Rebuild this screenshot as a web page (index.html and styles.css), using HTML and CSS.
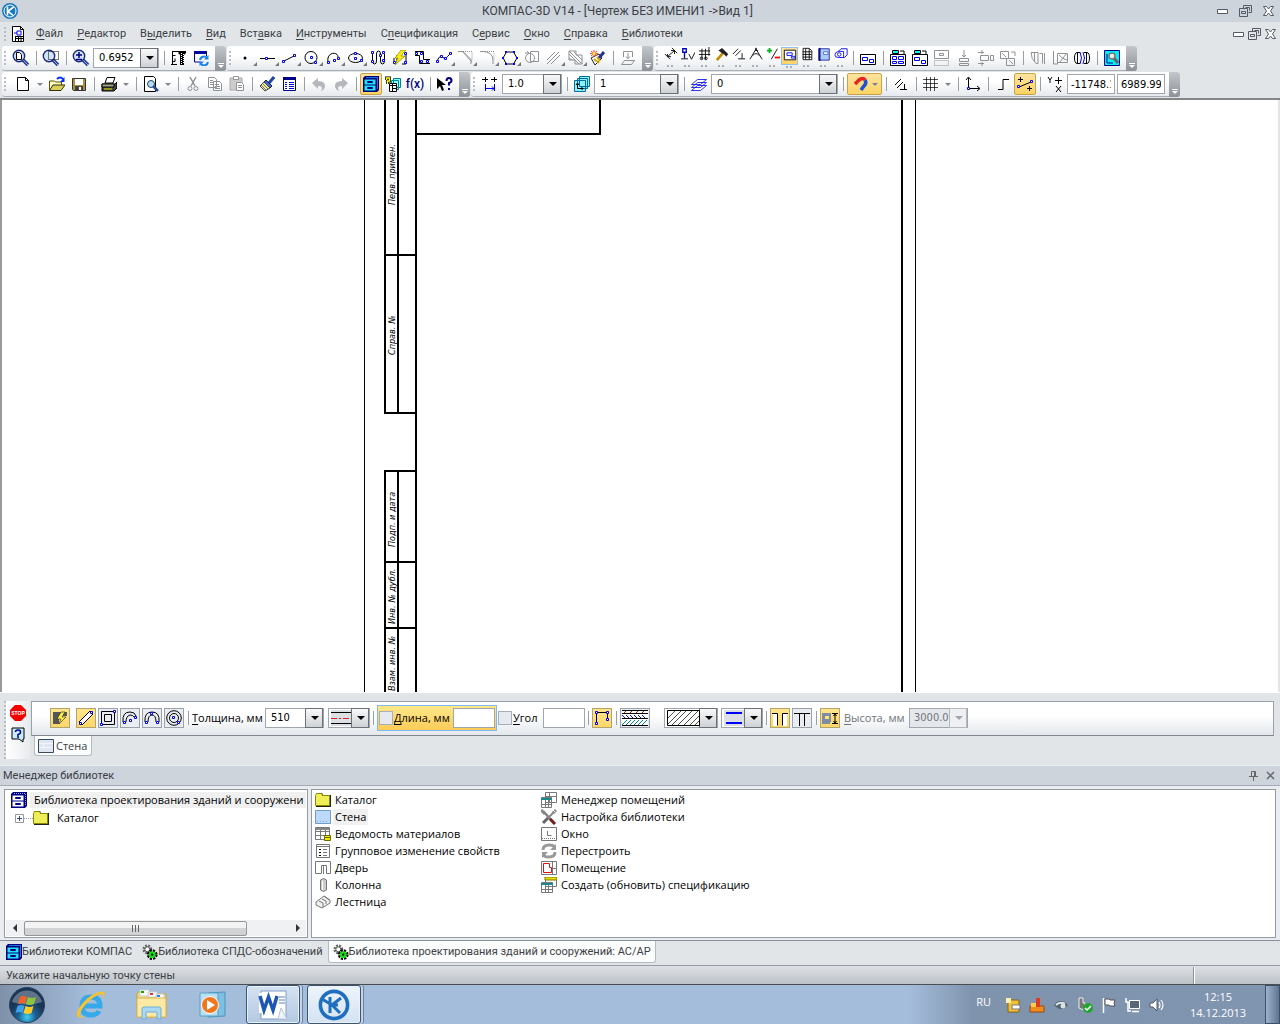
FILE: index.html
```html
<!DOCTYPE html>
<html lang="ru">
<head>
<meta charset="UTF-8">
<meta name="viewport" content="width=device-width, initial-scale=1.0">
<title>КОМПАС-3D V14</title>
<link rel="stylesheet" href="styles.css">
</head>
<body>

<svg class="sprite" aria-hidden="true">
    <symbol id="lens" viewBox="0 0 18 18"><path d="M11 11l5 5" stroke="#2b3f8c" stroke-width="3.5"/><path d="M11 11l5 5" stroke="#8fb0ee" stroke-width="1"/><circle cx="7" cy="7" r="5.7" fill="#cfe4fb" stroke="#1b2a7a" stroke-width="1.4"/></symbol>
    <symbol id="folder" viewBox="0 0 16 16"><path d="M1 3l1-2h5l1 2h8v12H1z" fill="#222"/><path d="M.5 3.500l1-2h5l1 2h7v10H.5z" fill="#f0ee58" stroke="#8a8a00"/></symbol>
    <symbol id="cabinet" viewBox="0 0 16 16"><path d="M0 2l2-2h14v14l-2 2H0z" fill="#00007a"/><path d="M1.500 3.500h11v11h-11z" fill="#1ee3f5"/><path d="M1 9h12" stroke="#00007a"/><path d="M4.500 5.500h5v1h-5zM4.500 11.500h5v1h-5z" fill="none" stroke="#00007a"/><path d="M14.500 1v12M3 1.500h12" stroke="#1f6fe8"/></symbol>
    <symbol id="gears" viewBox="0 0 18 18"><circle cx="6" cy="6" r="4" fill="none" stroke="#666" stroke-width="3" stroke-dasharray="2 1.2"/><circle cx="6" cy="6" r="2.800" fill="#fff" stroke="#444"/><circle cx="11.500" cy="12" r="4.300" fill="none" stroke="#000" stroke-width="3.500" stroke-dasharray="2.200 1.200"/><circle cx="11.500" cy="12" r="3.800" fill="#14e014"/><circle cx="11.500" cy="12" r="1.300" fill="#000"/></symbol>
    <symbol id="kompas" viewBox="0 0 16 16"><circle cx="8" cy="8" r="6.800" fill="none" stroke="currentColor" stroke-width="1.800"/><path d="M6 4v8M11.500 4.500L7 8l4 4M2 5l5 3h3" fill="none" stroke="currentColor" stroke-width="1.500"/></symbol>
    <symbol id="restore" viewBox="0 0 13 12"><path d="M4.500 3.500v-3h8v7h-3M.5 3.500h8v8h-8z" fill="none" stroke="#555a66"/><path d="M2.500 6.500h4v2h-4zM6.500 2.500h4v3" fill="none" stroke="#555a66"/></symbol>
    <symbol id="close" viewBox="0 0 11 10"><path d="M.5.5h3l2 2.500 2-2.500h3L7.500 5l3 4.500h-3L5.500 7l-2 2.500h-3L3.500 5z" fill="#fff" stroke="#555a66"/></symbol>
</svg>

<header class="titlebar">
    <svg class="app-logo" viewBox="0 0 16 16"><circle cx="8" cy="8" r="8" fill="#1779c0"/><circle cx="8" cy="8" r="6" fill="none" stroke="#fff"/><path d="M5.500 3.500v9M11.500 4L6 8.300l5 4" fill="none" stroke="#fff" stroke-width="1.600"/></svg>
    <h1>КОМПАС-3D V14 - [Чертеж БЕЗ ИМЕНИ1 -&gt;Вид 1]</h1>
    <div class="win-buttons">
        <button aria-label="Свернуть"><svg width="11" height="5"><path d="M.5.5h10v4H.5z" fill="#fff" stroke="#555a66"/></svg></button>
        <button aria-label="Восстановить"><svg width="13" height="12"><use href="#restore"/></svg></button>
        <button aria-label="Закрыть"><svg width="11" height="10"><use href="#close"/></svg></button>
    </div>
</header>

<nav class="menubar">
    <span class="grip"></span>
    <svg class="doc-icon" viewBox="0 0 14 16"><path d="M1.500.5h8l3 3v12h-11z" fill="#fff" stroke="#000"/><path d="M9.500.5v3h3M4.500 10v5M7.500 10v5M10 10v5M4 10.500h8M4 12.500h8" fill="none" stroke="#000"/><path d="M3 7h3V5h4v4H6V7" fill="none" stroke="#00f"/></svg>
    <button><u>Ф</u>айл</button>
    <button><u>Р</u>едактор</button>
    <button>В<u>ы</u>делить</button>
    <button><u>В</u>ид</button>
    <button>Вст<u>а</u>вка</button>
    <button><u>И</u>нструменты</button>
    <button>С<u>п</u>ецификация</button>
    <button>С<u>е</u>рвис</button>
    <button><u>О</u>кно</button>
    <button><u>С</u>правка</button>
    <button><u>Б</u>иблиотеки</button>
    <div class="win-buttons child">
        <button aria-label="Свернуть чертеж"><svg width="11" height="5"><path d="M.5.5h10v4H.5z" fill="#fff" stroke="#555a66"/></svg></button>
        <button aria-label="Восстановить чертеж"><svg width="13" height="12"><use href="#restore"/></svg></button>
        <button aria-label="Закрыть чертеж"><svg width="11" height="10"><use href="#close"/></svg></button>
    </div>
</nav>

<div class="toolbars">
<div class="toolbar-row">
    <div class="toolbar">
        <span class="grip"></span>
        <button class="tb" aria-label="Показать все"><svg class="big" viewBox="0 0 18 18"><use href="#lens"/><path class="k w" d="M4.500 3.500h3l2 2v5h-5z"/></svg></button>
        <span class="sep"></span>
        <button class="tb" aria-label="Увеличить рамкой"><svg class="big" viewBox="0 0 18 18"><use href="#lens"/><path class="k dot" d="M6.500 2.500h10v8h-10z"/></svg></button>
        <span class="sep"></span>
        <button class="tb" aria-label="Масштаб"><svg class="big" viewBox="0 0 18 18"><use href="#lens"/><path d="M4 6h6M7 3v6M4 10.500h6" stroke="#000080" stroke-width="1.500"/></svg></button>
        <span class="combo zoom"><select aria-label="Текущий масштаб"><option>0.6952</option></select></span>
        <span class="sep"></span>
        <button class="tb" aria-label="Перестроить"><svg viewBox="0 0 16 16"><path class="k" d="M1 1.500h14M1.500 1v13M4.500 5.500h-3M0 14.500h6M4 8.500v3h-2"/><path d="M9 1h6v2l-2 2v10H9V5L7 3z"/><path d="M10.500 3v12M12.500 4v10" stroke="#fff" stroke-dasharray="1 1"/></svg></button>
        <button class="tb" aria-label="Обновить изображение"><svg viewBox="0 0 16 16"><path d="M1.500 2v10h6M13.500 2v4" fill="none" stroke="#00008b"/><path d="M1 1h13v3H1z" fill="#0008a0"/><path d="M7 10a4 4 0 0 1 7-2M15 12a4 4 0 0 1-7 2" fill="none" stroke="#1684ee" stroke-width="2"/><path d="M15.500 5v4.500H11zM6.500 16v-4.500H11z" fill="#1684ee"/></svg></button>
        <button class="cap" aria-label="Параметры панели"></button>
    </div>

    <div class="toolbar">
        <span class="grip"></span>
        <button class="tb more" aria-label="Точка"><svg viewBox="0 0 16 16"><circle cx="7" cy="8" r="1.500"/></svg></button>
        <button class="tb more" aria-label="Прямая"><svg viewBox="0 0 16 16"><path class="k" d="M0 8.500h15"/><path class="n" d="M5.500 7.500h2v2h-2z"/></svg></button>
        <button class="tb more" aria-label="Отрезок"><svg viewBox="0 0 16 16"><path class="k" d="M2 11L12 6"/><path class="n" d="M.5 10.500h2v2h-2zM11.500 4.500h2v2h-2z"/></svg></button>
        <button class="tb more" aria-label="Окружность"><svg viewBox="0 0 16 16"><circle class="k" cx="7" cy="7.500" r="6"/><path class="n" d="M6.500 6.500h2v2h-2zM10.500 11.500h2v2h-2z"/></svg></button>
        <button class="tb more" aria-label="Дуга"><svg viewBox="0 0 16 16"><path class="k" d="M2 12C0 2 12 1 12 7"/><path class="n" d="M1.500 11.500h2v2h-2zM7.500 9.500h2v2h-2zM11.500 7.500h2v2h-2z"/></svg></button>
        <button class="tb more" aria-label="Эллипс"><svg viewBox="0 0 16 16"><ellipse class="k" cx="7.500" cy="8" rx="7" ry="4.500"/><path class="n" d="M6.500 2.500h2v2h-2zM6.500 7.500h2v2h-2zM12.500 9.500h2v2h-2z"/></svg></button>
        <button class="tb" aria-label="Непрерывный ввод"><svg viewBox="0 0 16 16"><path class="k" d="M2.500 3v8q0 3 2 3t2-3V4q0-3 2-3t2 3v7q0 3 2 3t2-3V4"/><path class="n" d="M1.500 1.500h2v2h-2zM1.500 10.500h2v2h-2zM9.500 4.500h2v2h-2zM12.500 1.500h2v2h-2zM12.500 9.500h2v2h-2z"/></svg></button>
        <button class="tb" aria-label="Линия"><svg viewBox="0 0 16 16"><path class="k" d="M2 8v5h3V5M10 14h4V4"/><path class="n" d="M1.500 11.500h2v2h-2zM12.500 2.500h2v2h-2zM12.500 11.500h2v2h-2z"/><path d="M9 0h5L9 6h4L3 15l3-7H3z" fill="#f7ee10" stroke="#8a8500" stroke-width=".7"/></svg></button>
        <button class="tb" aria-label="Мультилиния"><svg viewBox="0 0 16 16"><path class="k" d="M1 1.500h8.500v8H16M1 5.500h4.500v8H16"/><path class="n" d="M1.500 2.500h2v2h-2zM6.500 2.500h2v2h-2zM6.500 10.500h2v2h-2zM12.500 10.500h2v2h-2z"/></svg></button>
        <button class="tb more" aria-label="Кривая Безье"><svg viewBox="0 0 16 16"><path class="k" d="M1 12q2-7 5-5t4 1 5-5"/><path class="n" d="M.5 10.500h2v2h-2zM4.500 5.500h2v2h-2zM8.500 7.500h2v2h-2zM13.500 2.500h2v2h-2z"/></svg></button>
        <button class="tb more" aria-label="Фаска" disabled><svg viewBox="0 0 16 16"><path class="g" d="M0 1.500h5l8 8V14M4 1L14 12"/><path class="g dot" d="M5 1.500h9v9"/></svg></button>
        <button class="tb more" aria-label="Скругление" disabled><svg viewBox="0 0 16 16"><path class="g" d="M0 1.500h4q9 1 9 9V14"/><path class="g dot" d="M5 1.500h9v9"/></svg></button>
        <button class="tb more" aria-label="Многоугольник"><svg viewBox="0 0 16 16"><path class="k" d="M4.500 2h7l3.500 6-3.500 6h-7L1 8z"/><path d="M3 1h2v2H3zM11 1h2v2h-2zM14 7h2v2h-2zM11 13h2v2h-2zM3 13h2v2H3zM0 7h2v2H0z" fill="#00f"/></svg></button>
        <button class="tb" aria-label="Собрать контур" disabled><svg viewBox="0 0 16 16"><path class="g" d="M6.500 1.500h8v10h-8zM1 3l4 0-2-2"/><circle class="g" cx="6" cy="8" r="4.500"/></svg></button>
        <button class="tb more" aria-label="Эквидистанта" disabled><svg viewBox="0 0 16 16"><path class="g" d="M1 10L9 2M1 14L13 2M5 14l9-9"/></svg></button>
        <button class="tb more" aria-label="Штриховка" disabled><svg viewBox="0 0 16 16"><path class="g" d="M1 1h7v4h6v9H7v-4H1zM1 4l10 10M1 1l13 13M1 8l3 2M6 2l8 8"/></svg></button>
        <button class="tb" aria-label="Свойства"><svg viewBox="0 0 16 16"><path d="M1 8l8-4 3 4-7 7z" fill="#fff" stroke="#222"/><path d="M4 9l5 4M7 7l3 4" stroke="#d0a800" stroke-width="2"/><path d="M9 8l5-6" stroke="#26348c" stroke-width="3"/><path d="M4 0v7M0 3.500h8M1 1l6 5M7 1L1 6" stroke="#f33" /><circle cx="4" cy="3.500" r="1.500" fill="#ff3"/></svg></button>
        <span class="sep"></span>
        <button class="tb" aria-label="Вставка" disabled><svg viewBox="0 0 16 16"><path class="g" d="M3.500 7V1.500h9V7M8 3v6M6 6.500l2 2 2-2M1.500 14.500h10l3-4h-10z"/></svg></button>
        <button class="cap" aria-label="Параметры панели"></button>
    </div>

    <div class="toolbar compact">
        <span class="grip"></span>
        <button class="tb" aria-label="Размеры"><svg viewBox="0 0 16 16"><path class="k" d="M1 8l6 6M9 1l6 6M4 11l8-7M4 8v3h4M8 4h4v4"/></svg></button>
        <button class="tb" aria-label="Обозначения"><svg viewBox="0 0 16 16"><path class="k" d="M0 13.500h8M9 8l3 6 4-8"/><path d="M2 2h4v4H2zM4 6v7" fill="none" stroke="#0000c8" stroke-width="1.500"/></svg></button>
        <button class="tb" aria-label="Обозначения для строительства"><svg viewBox="0 0 16 16"><path class="k" d="M1 4.500h13M1 8.500h13M4.500 2v12M8.500 2v12M12.500 0v10"/><circle class="k" cx="4" cy="13" r="1.500"/><circle class="k" cx="9" cy="13" r="1.500"/></svg></button>
        <button class="tb" aria-label="Редактирование"><svg viewBox="0 0 16 16"><path d="M2 15l7-8" stroke="#c58a00" stroke-width="3"/><path d="M4 4l4-3 7 7-2 3-3-3-2-1z" fill="#222"/></svg></button>
        <button class="tb" aria-label="Параметризация"><svg viewBox="0 0 16 16"><path class="k" d="M1 8l6-6M4 10l6-6M7 13.500h8M11.500 13V7"/></svg></button>
        <button class="tb" aria-label="Измерения"><svg viewBox="0 0 16 16"><path class="k" d="M1 14L7 4l1-3 1 3 6 10M4 10q4-5 8 0M7 4h3"/></svg></button>
        <button class="tb" aria-label="Выделение"><svg viewBox="0 0 16 16"><path class="k" d="M6 14L13 2"/><path d="M1 4h6M4 1v6" stroke="#00b020" stroke-width="2"/><path d="M10 12h6" stroke="#f00" stroke-width="2"/></svg></button>
        <button class="tb active" aria-label="Виды"><svg viewBox="0 0 16 16"><path class="k w" d="M1.500 2.500h13v11h-13z"/><path class="b" d="M4.500 5.500h6v3h-6zM9.500 9.500h4v2h-4z"/></svg></button>
        <button class="tb" aria-label="Спецификация"><svg viewBox="0 0 16 16"><path class="k w" d="M3.500 1.500h7l3 3v10h-10zM3 5.500h10M3 8.500h10M3 11.500h10M6.500 2v12M10.500 2v12"/></svg></button>
        <button class="tb" aria-label="Отчеты"><svg viewBox="0 0 16 16"><path d="M2 2h12v13H2z" fill="#a9cdfa" stroke="#2020a0"/><path d="M3 1v15" stroke="#10107a" stroke-width="2"/><path d="M7.500 5.500h5v3h-5z" fill="#fff" stroke="#4a6ad0"/></svg></button>
        <button class="tb" aria-label="Вставки и макроэлементы"><svg viewBox="0 0 16 16"><path class="b" d="M5 5l3-3h7v7l-3 3H5q-4 0-4-3t4-4h6v7"/><circle class="b" cx="6" cy="8.500" r="2"/></svg></button>
        <span class="sep"></span>
        <button class="tb wide" aria-label="Создать новый вид"><svg viewBox="0 0 16 16"><path class="k w" d="M.5 4.500h15v10H.5z"/><path class="b" d="M2.500 7.500h5v3h-5zM9.500 9.500h4v3h-4z"/></svg></button>
        <span class="sep"></span>
        <button class="tb wide" aria-label="Вид с листа"><svg viewBox="0 0 16 16"><path class="k w" d="M.5 4.500h15v11H.5zM2.500.5h6v3h-6zM10 1h4v3"/><path d="M3 1h5v2H3z" fill="#0ff"/><path class="b" d="M2.500 6.500h4v3h-4zM8.500 6.500h5v3h-5zM2.500 11.500h4v2h-4zM8.500 11.500h5v2h-5z"/></svg></button>
        <button class="tb wide" aria-label="Произвольный вид"><svg viewBox="0 0 16 16"><path class="k w" d="M.5 4.500h15v11H.5zM2.500.5h6v3h-6zM10 1h4v3"/><path d="M3 1h5v2H3z" fill="#0ff"/><path class="b" d="M2.500 7.500h5v3h-5zM9.500 10.500h4v3h-4z"/></svg></button>
        <button class="tb wide" aria-label="Проекционный вид" disabled><svg viewBox="0 0 16 16"><path class="g" d="M.5.5h14v8H.5zM5.500 3.500h4v2h-4z"/><path class="g dot" d="M.5 10.500h14v5H.5z"/></svg></button>
        <button class="tb wide" aria-label="Разрез" disabled><svg viewBox="0 0 16 16"><path class="g" d="M8 0v7M6 5l2 2 2-2M3.500 8.500h9v3h-9zM3.500 13.500h9v2h-9z"/></svg></button>
        <button class="tb wide" aria-label="Местный разрез" disabled><svg viewBox="0 0 16 16"><path class="g" d="M2.500 5.500h8v5h-8zM0 2.500h6M4 0v4M0 13.500h6M4 12v4M12.500 5.500h3v5h-3z"/></svg></button>
        <button class="tb wide" aria-label="Выносной элемент" disabled><svg viewBox="0 0 16 16"><path class="g" d="M.5 1.500h8v7h-8zM6.500 8.500h8v7h-8zM2 3l4 4M9 10l4 4M11 2h4v4"/></svg></button>
        <span class="sep"></span>
        <button class="tb wide" aria-label="Разрыв вида" disabled><svg viewBox="0 0 16 16"><path class="g" d="M1 2.500h7v11H6Q1 9 1 2.500M9.500 3.500h3v10M14.500 3v11M4.500 3v9"/></svg></button>
        <button class="tb wide" aria-label="Разорвать" disabled><svg viewBox="0 0 16 16"><path class="g" d="M1.500 1v13h4V3.500h10v9h-10M7 5q3 4 8 5M8 12l6-8"/></svg></button>
        <button class="tb wide" aria-label="Изменить разрыв"><svg viewBox="0 0 16 16"><path class="k w" d="M6 2.500H3Q.5 3 .5 8T3 13.500h3M10 2.500h3q2.500.5 2.500 5.500T13 13.500h-3M3.500 3v10M12.500 3v10"/><path class="b" d="M6 2q3 6 0 12M9 2q3 6 0 12"/></svg></button>
        <span class="sep"></span>
        <button class="tb wide" aria-label="Управление видами"><svg viewBox="0 0 16 16"><path d="M.5.5h15v15H.5z" fill="#00f0f4" stroke="#00008b"/><path d="M3 4v9h6" fill="none" stroke="#00008b"/><path d="M9 7l5 6" stroke="#666" stroke-width="3"/><circle cx="8" cy="6" r="3" fill="#eee" stroke="#777" stroke-width="1.500"/></svg></button>
        <button class="cap" aria-label="Параметры панели"></button>
    </div>
</div>

<div class="toolbar-row">
    <div class="toolbar">
        <span class="grip roomy"></span>
        <button class="tb" aria-label="Создать"><svg viewBox="0 0 16 16"><path class="k w" d="M2.500 1.500h8l3 3v10h-11zM10.500 1.500v3h3"/></svg></button>
        <button class="drop" aria-label="Тип документа"></button>
        <button class="tb" aria-label="Открыть"><svg viewBox="0 0 16 16"><path d="M.5 14V5h5l1 1h6v3" fill="#fffbc0" stroke="#555500"/><path d="M.5 14.500L4 9h12l-4 5.500z" fill="#d8cf5e" stroke="#333300"/><path d="M8 3q3-3 6 0" fill="none" stroke="#0030ff" stroke-width="2"/><path d="M15.500 1v5H11z" fill="#0030ff"/></svg></button>
        <button class="tb" aria-label="Сохранить"><svg viewBox="0 0 16 16"><path d="M1.500 2.500h13v12h-12l-1-1z" fill="#a89040" stroke="#333"/><path d="M4 3h8v6H4z" fill="#fff"/><path d="M4 10h8v4H4z" fill="#444"/><path d="M8 11h2v3H8z" fill="#fff"/></svg></button>
        <span class="sep"></span>
        <button class="tb" aria-label="Печать"><svg viewBox="0 0 16 16"><path class="k w" d="M4 7l2-5.500h8L12 7z"/><path d="M1 8h13l2-2v6l-3 3H1z" fill="#444" stroke="#000"/><path d="M1 8h12v3H1z" fill="#a8a884" stroke="#000"/><path d="M3 13h8" stroke="#e6e600"/></svg></button>
        <button class="drop" aria-label="Параметры печати"></button>
        <span class="sep"></span>
        <button class="tb" aria-label="Предварительный просмотр"><svg viewBox="0 0 16 16"><path class="k w" d="M1.500.5h9l2 2v13h-11z"/><circle cx="8" cy="8" r="3.500" fill="#b4dcf8" stroke="#245"/><path d="M10 10l5 5" stroke="#2948a0" stroke-width="2.500"/></svg></button>
        <button class="drop" aria-label="Параметры просмотра"></button>
        <span class="sep"></span>
        <button class="tb" aria-label="Вырезать" disabled><svg viewBox="0 0 16 16"><path class="g" d="M5 1l5 9M11 1l-5 9" stroke-width="1.500"/><circle class="g" cx="5" cy="12.500" r="2"/><circle class="g" cx="11" cy="12.500" r="2"/></svg></button>
        <button class="tb" aria-label="Копировать" disabled><svg viewBox="0 0 16 16"><path class="g w" d="M1.500 1.500h6l2 2v8h-8zM6.500 5.500h6l2 2v7h-8zM8 8.500h4M8 10.500h5M8 12.500h5M3 4.500h3M3 6.500h3M3 8.500h3"/></svg></button>
        <button class="tb" aria-label="Вставить" disabled><svg viewBox="0 0 16 16"><path d="M1 2h12v12H1z" fill="#ccc" stroke="#aaa"/><path class="g w" d="M4.500.5h5v3h-5zM7.500 6.500h5l2 2v6h-7zM9 9.500h4M9 11.500h4"/></svg></button>
        <span class="sep"></span>
        <button class="tb" aria-label="Копировать свойства"><svg viewBox="0 0 16 16"><path d="M15 1l-5 6" stroke="#2846a0" stroke-width="3"/><path d="M7 4l6 6-2 2-6-6z" fill="#4468d8" stroke="#123"/><path d="M5 6l6 6-5 3-5-5z" fill="#f1ed95" stroke="#444"/><path d="M4 8l5 5M2 9l5 5" stroke="#777"/></svg></button>
        <button class="tb" aria-label="Свойства документа"><svg viewBox="0 0 16 16"><path d="M2.500 1.500h12v13h-12z" fill="#fff" stroke="#00008b"/><path d="M2 1h13v3H2z" fill="#00008b"/><path class="b" d="M4 6.500h2M4 8.500h2M4 10.500h2M4 12.500h2M8 6.500h5M8 8.500h5M8 10.500h5M8 12.500h5"/></svg></button>
        <span class="sep"></span>
        <button class="tb" aria-label="Отменить" disabled><svg viewBox="0 0 16 16"><path d="M1 7l6-5v3q8 0 7 6-1 3-4 4 3-5-3-5v3z" fill="#b4b8bc"/></svg></button>
        <button class="tb" aria-label="Повторить" disabled><svg viewBox="0 0 16 16"><path d="M15 7L9 2v3q-8 0-7 6 1 3 4 4-3-5 3-5v3z" fill="#b4b8bc"/></svg></button>
        <span class="sep"></span>
        <button class="tb active" aria-label="Менеджер библиотек"><svg viewBox="0 0 16 16"><use href="#cabinet"/></svg></button>
        <button class="tb" aria-label="Менеджер документа"><svg viewBox="0 0 16 16"><path d="M8.500 2.500h7v9h-7zM6.500 4.500h7v9h-7z" fill="#8ff" stroke="#088"/><path class="k w" d="M4.500 7.500h7v8h-7zM4 9.500h7M7.500 7v8M8 12.500h3"/><path d="M1.500 4V2h3v3h-2v3" fill="none" stroke="#000" stroke-width="3"/><path d="M1.500 4V2h3v3h-2v3" fill="none" stroke="#ff0" stroke-width="1.500"/></svg></button>
        <button class="tb fx" aria-label="Переменные">f(x)</button>
        <span class="sep"></span>
        <button class="tb" aria-label="Справка"><svg viewBox="0 0 16 16"><path d="M0 2v11l3-3 2 5 2-1-2-5h4z"/><path d="M9.500 5q0-3 2.500-3t2.500 2.500q0 2-2.500 2.500V9.500M11 13h2" stroke-width="2" fill="none" stroke="#000080"/></svg></button>
        <button class="cap" aria-label="Параметры панели"></button>
    </div>

    <div class="toolbar">
        <span class="grip"></span>
        <button class="tb" aria-label="Шаг курсора"><svg viewBox="0 0 16 16"><path class="k" d="M0 3.500h6M3.500 1v5M9 3.500h6M12.500 1v5"/><path class="b" d="M4 12.500h9M3.500 8v7M12.500 8v7M10 10.500l2 2-2 2"/></svg></button>
        <span class="combo step"><select aria-label="Текущий шаг курсора"><option>1.0</option></select></span>
        <span class="sep"></span>
        <button class="tb" aria-label="Состояния видов"><svg viewBox="0 0 16 16"><path d="M5.500.5h10v10h-10zM3.500 2.500h10v10h-10zM.5 4.500h11v11H.5z" fill="#86f3fa" stroke="#0a6a9a"/><path class="k" d="M3.500 7v5.500H9M2 9l1.500-2L5 9M7.500 11L9 12.500 7.500 14"/></svg></button>
        <span class="combo view"><select aria-label="Текущий вид"><option>1</option></select></span>
        <span class="sep"></span>
        <button class="tb" aria-label="Состояния слоев"><svg viewBox="0 0 16 16"><path class="b w" d="M.5 14.500h9l6-5h-9zM.5 11.500h9l6-5h-9zM.5 8.500h9l6-5h-9z" stroke-width=".8"/></svg></button>
        <span class="combo layer"><select aria-label="Текущий слой"><option>0</option></select></span>
        <span class="sep"></span>
        <button class="tb active magnet" aria-label="Привязки"><svg viewBox="0 0 16 16"><path d="M3 8L7 4q4-3 6 0" fill="none" stroke="#e8231c" stroke-width="3.500"/><path d="M13 4q2 3-1 6l-3 4" fill="none" stroke="#1d4fd8" stroke-width="3.500"/></svg><i class="tri"></i></button>
        <span class="sep"></span>
        <button class="tb" aria-label="Запретить привязки"><svg viewBox="0 0 16 16"><path class="k" d="M2 9l6-6M4 12l6-6M7 13.500h7M11.500 13V8"/></svg></button>
        <span class="sep"></span>
        <button class="tb" aria-label="Сетка"><svg viewBox="0 0 16 16"><path class="k thinner" d="M0 3.500h15M0 7.500h15M0 11.500h15M3.500 1v14M7.500 1v14M11.500 1v14"/></svg></button>
        <button class="drop" aria-label="Параметры сетки"></button>
        <span class="sep"></span>
        <button class="tb" aria-label="Локальная СК"><svg viewBox="0 0 16 16"><path class="k" d="M3.500 12V2M1 4l2.500-3L6 4M5 12.500h9M12 10l3 2.500-3 2.500"/><path class="n" d="M2.500 11.500h2v2h-2z"/></svg></button>
        <span class="sep"></span>
        <button class="tb" aria-label="Ортогональное черчение"><svg viewBox="0 0 16 16"><path class="k" d="M3 13.500h5V3.500h6"/></svg></button>
        <button class="tb active" aria-label="Округление"><svg viewBox="0 0 16 16"><path class="k" d="M1 3.500h5M3.500 1v5M10 12.500h5M12.500 10v5M2 11l12-5"/><path class="n" d="M.5 9.500h2v2h-2zM13.500 4.500h2v2h-2z"/></svg></button>
        <span class="sep"></span>
        <button class="tb" aria-label="Координаты курсора"><svg viewBox="0 0 16 16"><path class="k" d="M1 1l2 3 2-3M3 4v3M8 4.500h7M11.500 1v7M9 10l5 6M14 10l-5 6"/></svg></button>
        <input class="coord" aria-label="X" value="-11748.19">
        <input class="coord" aria-label="Y" value="6989.991">
        <button class="cap" aria-label="Параметры панели"></button>
    </div>
</div>
</div>

<main class="canvas">
    <!-- sheet frame with the side title block -->
    <svg class="sheet" width="1276" height="593">
        <path class="thin" d="M362.500 0v593M913.500 0v593"/>
        <path class="bold" d="M414 0v593M900 0v593M414 34h184V0M383 0v313h31M396 0v313M383 155h31M414 371h-31v222M396 371v222M383 462h31M383 528h31"/>
        <g class="gost">
            <text transform="translate(393 105) rotate(-90)">Перв. примен.</text>
            <text transform="translate(393 255) rotate(-90)">Справ. №</text>
            <text transform="translate(393 447) rotate(-90)">Подп. и дата</text>
            <text transform="translate(393 524) rotate(-90)">Инв. № дубл.</text>
            <text transform="translate(393 591) rotate(-90)">Взам. инв. №</text>
        </g>
    </svg>
</main>

<section class="props">
    <span class="grip tall"></span>
    <div class="props-side">
        <button aria-label="Прервать команду"><svg width="16" height="16" viewBox="0 0 16 16"><path d="M5 0h6l5 5v6l-5 5H5l-5-5V5z" fill="#f00000"/><text x="8" y="10" class="stop-text">STOP</text></svg></button>
        <button aria-label="Справка"><svg width="14" height="16" viewBox="0 0 14 16"><path d="M1 1h12v11h-1v3l-4-3H1z" fill="#c8ecfb" stroke="#000"/><path d="M4.500 5q0-2 2.500-2t2.500 2T7 7.500V9M6 10h2" fill="none" stroke="#00008b" stroke-width="1.500"/></svg></button>
    </div>
    <div class="props-main">
        <div class="props-bar">
            <button class="pb active first" aria-label="Автосоздание"><svg viewBox="0 0 16 16"><path d="M1 2h14v4H7v8H1z" fill="#555"/><path d="M9 2L5 9h4l-2 5 7-7h-4l3-5z" fill="#fff34a" stroke="#222" stroke-width=".6"/></svg></button>
            <button class="pb active" aria-label="Отрезок"><svg viewBox="0 0 16 16"><path class="k w" d="M1 12L12 1l3 3L4 15z"/><path class="n" d="M1.500 12.500h2v2h-2zM12.500 1.500h2v2h-2z"/></svg></button>
            <button class="pb" aria-label="Прямоугольник"><svg viewBox="0 0 16 16"><path class="k" d="M1.500 1.500h13v13h-13zM4.500 4.500h7v7h-7z"/><path class="n" d="M.5 13.500h2v2h-2zM13.500.5h2v2h-2z"/></svg></button>
            <button class="pb" aria-label="Дуга"><svg viewBox="0 0 16 16"><path class="k" d="M1 12Q0 2 8 2q5 0 6 4M4 12q0-6 4-7 3 0 4 2"/><path class="n" d="M1.500 11.500h2v2h-2zM7.500 9.500h2v2h-2zM12.500 6.500h2v2h-2z"/></svg></button>
            <button class="pb" aria-label="Дуга по трем точкам"><svg viewBox="0 0 16 16"><path class="k" d="M1 12Q0 2 8 2t7 10M4 12q0-7 4-7t4 7"/><path class="n" d="M1.500 11.500h2v2h-2zM6.500 2.500h2v2h-2zM12.500 11.500h2v2h-2z"/></svg></button>
            <button class="pb" aria-label="Окружность"><svg viewBox="0 0 16 16"><circle class="k" cx="8" cy="8" r="7.300"/><circle class="k" cx="8" cy="8" r="4.500"/><path class="n" d="M6.500 6.500h2v2h-2zM11.500 11.500h2v2h-2z"/></svg></button>
            <span class="sep"></span>
            <label for="thickness"><u>Т</u>олщина, мм</label>
            <span class="combo p510"><select id="thickness"><option>510</option></select></span>
            <span class="combo swatch-combo">
                <select aria-label="Положение базовой линии"><option></option></select>
                <svg class="swatch" width="20" height="16"><path d="M0 0h20v16H0z" fill="#dcdfe3"/><path class="k" d="M0 2.500h20M0 13.500h20"/><path d="M0 8.500h20" stroke="#e02020" stroke-dasharray="6 2 2 2"/></svg>
            </span>
            <span class="sep"></span>
            <span class="field hot"><input type="checkbox" id="lenLock"><label for="lenLock"><u>Д</u>лина, мм</label><input class="num" aria-label="Длина, мм"></span>
            <span class="field"><input type="checkbox" id="angLock"><label for="angLock"><u>У</u>гол</label><input class="num" aria-label="Угол"></span>
            <span class="sep"></span>
            <button class="pb active" aria-label="Замкнуть"><svg viewBox="0 0 16 16"><path class="k" d="M2.500 12V2.500h11V9"/><path class="n" d="M1.500 12.500h2v2h-2zM1.500 1.500h2v2h-2zM12.500 1.500h2v2h-2zM12.500 8.500h2v2h-2z"/></svg></button>
            <span class="sep"></span>
            <button class="pb layers" aria-label="Слои стены"><svg width="26" height="16" viewBox="0 0 26 16"><path d="M0 0h26v16H0z" fill="#fff"/><path d="M1 4l3-3M7 4l3-3M13 4l3-3M19 4l3-3" stroke="#e00"/><path d="M0 5l3 3M4 5l3 3M8 5l3 3M12 5l3 3M16 5l3 3M20 5l3 3" stroke="#00f"/><path d="M0 15l5-5M4 15l5-5M8 15l5-5M12 15l5-5M16 15l5-5M20 15l5-5" stroke="#088"/><path class="k" d="M0 .5h26M0 3.500h26M0 8.500h26M0 15.500h26"/></svg></button>
            <span class="combo hatch-combo">
                <select aria-label="Штриховка"><option></option></select>
                <svg class="swatch" width="33" height="16"><path class="k w" d="M.5.5h32v15H.5z"/><path class="k thinner" d="M1 8l7-7M1 14L14 1M5 15L19 1M11 15L25 1M17 15L31 1M23 15l9-9M28 15l4-4"/></svg>
            </span>
            <span class="combo swatch-combo">
                <select aria-label="Стиль линии"><option></option></select>
                <svg class="swatch" width="20" height="16"><path d="M0 0h20v16H0z" fill="#dcdfe3"/><path d="M2 3h16M2 13h16" stroke="#00f" stroke-width="2"/></svg>
            </span>
            <span class="sep"></span>
            <button class="pb active" aria-label="Обрезать"><svg viewBox="0 0 16 16"><path d="M1 4h5v12h4V4h5v12H1z" fill="#fff"/><path class="k" d="M0 3.500h5.500v12M16 3.500h-5.500v12"/></svg></button>
            <button class="pb" aria-label="Объединить"><svg viewBox="0 0 16 16"><path class="k" d="M0 3.500h16M5.500 4v12M10.500 4v12"/></svg></button>
            <span class="sep"></span>
            <button class="pb active" aria-label="Высота по этажу"><svg viewBox="0 0 16 16"><path d="M0 3h9v9H8v2H0z" fill="#7d8da6"/><path d="M3 6h4v3H3z" fill="#ffe27a"/><path class="k" d="M10 3.500h6M13 4v9M10 13.500h6M11.500 6L13 4l1.500 2M11.500 11l1.500 2 1.500-2"/></svg></button>
            <label class="off" for="height"><u>В</u>ысота, мм</label>
            <span class="combo p510 off"><select id="height" disabled><option>3000.0</option></select></span>
        </div>
        <button class="props-tab"><svg width="16" height="14"><path d="M.5.5h15v13H.5z" fill="#dfe6ef" stroke="#3a4a5e"/><path d="M1 4.500h14M1 8.500h14M5.500 5v4" stroke="#f2f6fa"/></svg>Стена</button>
    </div>
</section>

<section class="manager">
    <div class="manager-title">
        <h2>Менеджер библиотек</h2>
        <button aria-label="Закрепить"><svg width="9" height="10"><path d="M2.500 5V.5h4V5M5.500 1v4M0 5.500h9M4.500 6v4" fill="none" stroke="#666"/></svg></button>
        <button aria-label="Закрыть панель"><svg width="9" height="9"><path d="M1 1l7 7M8 1L1 8" stroke="#666" stroke-width="1.500"/></svg></button>
    </div>
    <div class="manager-body">
        <div class="tree">
            <div class="tree-rows">
                <div class="tree-row"><svg width="16" height="16" viewBox="0 0 16 16"><path d="M0 2l2-2h14v14l-2 2H0z" fill="#00008b"/><path d="M1.500 3.500h11v11h-11z" fill="#fff"/><path d="M1 9h12" stroke="#00008b"/><path d="M4.500 5.500h5v1h-5zM4.500 11.500h5v1h-5z" fill="none" stroke="#00008b"/><path d="M3 1.500h12M14.500 2v11" stroke="#9ab" stroke-dasharray="1 1"/></svg><span class="sel">Библиотека проектирования зданий и сооружени</span></div>
                <div class="tree-row child"><button class="plus" aria-label="Развернуть"><svg width="9" height="9"><path d="M.5.5h8v8h-8z" fill="#fff" stroke="#999"/><path d="M2 4.500h5M4.500 2v5" stroke="#2a4a9a"/></svg></button><i class="dots"></i><svg width="16" height="16"><use href="#folder"/></svg><span>Каталог</span></div>
            </div>
            <div class="scrollbar">
                <button class="arrow left" aria-label="Влево"></button>
                <div class="thumb"><i></i></div>
                <button class="arrow right" aria-label="Вправо"></button>
            </div>
        </div>
        <ul class="files">
            <li><svg viewBox="0 0 16 16"><use href="#folder"/></svg><span>Каталог</span></li>
            <li class="picked"><svg viewBox="0 0 16 16"><path d="M.5 1.500h15v13H.5z" fill="#bcd9fa" stroke="#6d9bcc"/><path d="M2 12.500h12" stroke="#7fa8d8" stroke-dasharray="1 2"/></svg><span>Стена</span></li>
            <li><svg viewBox="0 0 16 16"><path class="m w" d="M.5 1.500h14v12H.5zM1 5.500h14M1 9.500h14M5.500 2v11M10.500 2v11"/><path d="M1 2h13v2H1z" fill="#888"/><path d="M9.500 9.500h6v5h-6z" fill="#f2e800" stroke="#6a6a00"/><path d="M9 11.500h6" stroke="#6a6a00"/></svg><span>Ведомость материалов</span></li>
            <li><svg viewBox="0 0 16 16"><path class="m w" d="M1.500 1.500h13v13h-13zM1 3.500h13"/><path class="k" d="M4 6.500h2M4 9.500h2M4 12.500h2"/><path class="m" d="M8 6.500h4M8 9.500h4M8 12.500h4"/></svg><span>Групповое изменение свойств</span></li>
            <li><svg viewBox="0 0 16 16"><path class="m w" d="M.5 1.500h15v12h-4v-8h-5v8h-6zM8.500 6v8"/></svg><span>Дверь</span></li>
            <li><svg viewBox="0 0 16 16"><path d="M5.500 3q3-3 6 0v10q-3 3-6 0z" fill="#ccc" stroke="#777"/><path d="M7.500 4v9" stroke="#fff"/></svg><span>Колонна</span></li>
            <li><svg viewBox="0 0 16 16"><path d="M1 8l8-6 6 4v3l-8 5-6-3z" fill="#f0f0f0" stroke="#777"/><path class="m" d="M4 7l4 2v4M7 5l4 2v3M9 2l5 4"/></svg><span>Лестница</span></li>
            <li><svg viewBox="0 0 16 16"><path class="m w" d="M4.500.5h11v10h-11zM8.500 1v9M5 4.500h10M.5 5.500h10v10H.5zM4.500 6v9M7.500 6v9M1 12.500h9"/><path d="M0 6h11v2H0z" fill="#1b8a8f"/></svg><span>Менеджер помещений</span></li>
            <li><svg viewBox="0 0 16 16"><path d="M2 2l11 12" stroke="#7b8088" stroke-width="2.500"/><path d="M14 2L7 9" stroke="#888" stroke-width="2"/><path d="M7 9l-5 5" stroke="#666" stroke-width="3"/><path d="M9 10l5 5" stroke="#7a1d1d" stroke-width="3"/><path d="M0 1l4 4M12 4l3-3" stroke="#888" stroke-width="3"/><path d="M12 1l2 2" stroke="#fff"/></svg><span>Настройка библиотеки</span></li>
            <li><svg viewBox="0 0 16 16"><path class="m w" d="M.5 1.500h15v13H.5z"/><path class="m" d="M6.500 5v4.500h4"/><path class="m dot" d="M1 12.500h14"/></svg><span>Окно</span></li>
            <li><svg viewBox="0 0 16 16"><path d="M2 7Q2 2 8 2t5 3M14 9q0 5-6 5t-5-3" fill="none" stroke="#999" stroke-width="3"/><path d="M15 1v6H9zM1 15V9h6z" fill="#999"/></svg><span>Перестроить</span></li>
            <li><svg viewBox="0 0 16 16"><path class="m w" d="M.5 1.500h15v13H.5zM10 8.500h5M11.500 2v12"/><path d="M2.500 3.500h6v4h2v5h-8z" fill="#fff" stroke="#e01010"/></svg><span>Помещение</span></li>
            <li><svg viewBox="0 0 16 16"><path class="m w" d="M4.500 1.500h11v8h-11zM.5 5.500h11v10H.5zM4.500 6v9M7.500 6v9M1 12.500h11"/><path d="M4 0h12v3H4z" fill="#e8e000" stroke="#777700"/><path d="M0 6h12v2H0z" fill="#1b8a8f"/></svg><span>Создать (обновить) спецификацию</span></li>
        </ul>
    </div>
    <div class="manager-tabs">
        <button><svg width="16" height="16"><use href="#cabinet"/></svg>Библиотеки КОМПАС</button>
        <button><svg width="16" height="16"><use href="#gears"/></svg>Библиотека СПДС-обозначений</button>
        <button class="current"><svg width="16" height="16"><use href="#gears"/></svg>Библиотека проектирования зданий и сооружений: АС/АР</button>
    </div>
</section>

<footer class="status">
    <span>Укажите начальную точку стены</span>
    <i></i>
</footer>

<div class="taskbar">
    <button class="task start" aria-label="Пуск"><svg width="38" height="38" viewBox="0 0 38 38"><defs><radialGradient id="orb" cy=".85"><stop offset="0" stop-color="#3fd0f5"/><stop offset=".5" stop-color="#1d6094"/><stop offset="1" stop-color="#1b3654"/></radialGradient></defs><circle cx="19" cy="19" r="17.500" fill="url(#orb)" stroke="#26415f"/><path d="M4 16a15.500 15.500 0 0 1 30 0q-15 5-30 0z" fill="#fff" opacity=".3"/><path d="M12 11q4-2 7 0l-2 7q-3-2-7 0z" fill="#f0622a"/><path d="M20 11q4 2 8 0l-2 7q-4 2-8 0z" fill="#8cc63e"/><path d="M9.500 20q4-2 7 0l-2 7q-3-2-7 0z" fill="#3fa0e8"/><path d="M17.500 20q4 2 8 0l-2 7q-4 2-8 0z" fill="#ffc926"/></svg></button>
    <button class="task" aria-label="Internet Explorer"><svg width="32" height="34" viewBox="0 0 32 34"><path d="M8 18h17q0-9-9-9T7 18t9 9q6 0 8-4" fill="none" stroke="#36a9ea" stroke-width="5"/><path d="M3 29C-2 26 10 8 24 4c6-2 7 2 4 7 1-5-1-6-5-4C12 12 4 24 5 28q1 2 6-1-4 4-8 2z" fill="#f7c22b"/></svg></button>
    <button class="task" aria-label="Проводник"><svg width="34" height="32" viewBox="0 0 34 32"><path d="M2 5l1-2h10l1 2h17v23H2z" fill="#f3d87c" stroke="#c9a33d"/><path d="M5 1h9v6H5zM13 3h9v5h-9zM21 5h8v5h-8z" fill="#fff" stroke="#ccc"/><path d="M6 3h3" stroke="#0a0" stroke-width="2"/><path d="M15 5h3" stroke="#d33" stroke-width="2"/><path d="M22 7h3" stroke="#28f" stroke-width="2"/><path d="M2 9h29v19H2z" fill="#fbe9a4" stroke="#d8b650"/><path d="M7 30V20q0-2 2-2h15q2 0 2 2v10h-4v-7H11v7z" fill="#a9d8f2" stroke="#6faed8"/></svg></button>
    <button class="task" aria-label="Проигрыватель"><svg width="30" height="28" viewBox="0 0 30 28"><path d="M10 2l17-1v24l-17 1z" fill="#7fc0e2" stroke="#4c93bb"/><path d="M2 2h18v23H2z" fill="#b7dff2" stroke="#5b9fc5"/><circle cx="12" cy="14" r="8.500" fill="#f0771c" stroke="#fff"/><path d="M9 9l8 5-8 5z" fill="#fff"/></svg></button>
    <button class="task open word" aria-label="Word"><svg width="30" height="30" viewBox="0 0 30 30"><path d="M3 1h25v28H3z" fill="#fff" stroke="#7f9cc9"/><path d="M21 7h6M21 10h6M21 13h6" stroke="#5b82bf"/><path d="M1 3h19v20H1z" fill="#fff"/><path d="M2 6l4 14 4.500-13L15 20l4-14" fill="none" stroke="#1d55b4" stroke-width="3.500"/><path d="M20 29l3-11 6 11z" fill="#eef3fa" stroke="#b6c4da"/></svg></button>
    <button class="task open app" aria-label="КОМПАС-3D"><svg width="32" height="32"><use href="#kompas"/></svg></button>
    <div class="tray">
        <span class="lang">RU</span>
        <svg viewBox="0 0 16 16"><path d="M3 3h11v12H3z" fill="#f0c23c" stroke="#8a6410"/><path d="M1 1h5v5H1z" fill="#fff2b0"/><path d="M7 8h8v4H7z" fill="#fff" stroke="#777"/></svg>
        <svg viewBox="0 0 16 16"><path d="M1 9h14v6H1z" fill="#f08b1d" stroke="#9a4d08"/><path d="M7 1h4v9H7z" fill="#e03b20"/><path d="M2 6h5v4H2z" fill="#ffcf50"/></svg>
        <svg viewBox="0 0 16 16"><path d="M1 8q6-8 14 0-7 8-14 0z" fill="#52626e"/><path d="M3 8q4-4 9-1" fill="none" stroke="#dfe7ec" stroke-width="2"/><circle cx="10" cy="9" r="2.500" fill="#d8e0e5"/></svg>
        <svg viewBox="0 0 16 16"><path d="M2 1h4v5h2v5q-3 3-6 0z" fill="#777" stroke="#eee"/><circle cx="11" cy="11" r="5" fill="#23a532"/><path d="M8 11l2 2 4-4" fill="none" stroke="#fff" stroke-width="1.500"/></svg>
        <svg viewBox="0 0 16 16"><path d="M2.500 1v15" stroke="#fff" stroke-width="1.500"/><path d="M4 2h4l1 1h5l-1 3 1 3H9L8 8H4z" fill="#fff" stroke="#555"/></svg>
        <svg viewBox="0 0 16 16"><path d="M4.500 3.500h10v8h-10z" fill="#567" stroke="#fff"/><path d="M7 14.500h7M1 1v4h2v9h3" fill="none" stroke="#fff" stroke-width="1.500"/></svg>
        <svg viewBox="0 0 16 16"><path d="M1 6h3l4-4v12l-4-4H1z" fill="#fff" stroke="#556"/><path d="M10 5q2 3 0 6M12 3q4 5 0 10" fill="none" stroke="#fff" stroke-width="1.200"/></svg>
        <div class="clock"><span>12:15</span><span>14.12.2013</span></div>
        <button class="desktop" aria-label="Свернуть все окна"></button>
    </div>
</div>

</body>
</html>
```
FILE: styles.css
```css
* {
    box-sizing: border-box;
}
body {
    margin: 0;
    height: 100vh;
    display: flex;
    flex-direction: column;
    overflow: hidden;
    background-color: #e1e5e8;
    color: #3c3f45;
    font-family: Roboto, "Open Sans", sans-serif;
    font-size: 11px;
    line-height: 16px;
}
button {
    font: inherit;
    color: inherit;
    background: none;
    border: 0;
    padding: 0;
    display: flex;
    align-items: center;
    justify-content: center;
    flex: none;
}
input, select {
    font: inherit;
    color: #000;
    border: 0;
    margin: 0;
    border-radius: 0;
}
h1, h2, ul {
    margin: 0;
    padding: 0;
    font-size: inherit;
    font-weight: normal;
}
svg {
    flex: none;
    display: block;
}
u {
    text-underline-offset: 2px;
}
.sprite {
    position: absolute;
    width: 0;
    height: 0;
}

/* icon strokes */
.k { stroke: #000; fill: none; }
.b { stroke: #0000f0; fill: none; }
.g { stroke: #8e9195; fill: none; }
.m { stroke: #777; fill: none; }
.n { stroke: #0000f0; fill: #fff; }
.w { fill: #fff; }
.dot { stroke-dasharray: 1 1; }
.thinner { stroke-width: .7; }

/* title and menu */
.titlebar {
    display: flex;
    align-items: center;
    height: 22px;
    flex: none;
    padding: 0 6px 0 2px;
    background-color: #cdd4dc;
}
.app-logo {
    width: 16px;
    height: 16px;
}
.titlebar h1 {
    flex: 1;
    text-align: center;
    font-size: 12px;
}
.win-buttons {
    display: flex;
    align-items: center;
    gap: 11px;
}
.win-buttons.child {
    margin-left: auto;
    gap: 4px;
}
.menubar {
    display: flex;
    align-items: center;
    gap: 14px;
    height: 24px;
    flex: none;
    padding: 0 4px 0 2px;
}
.menubar .grip {
    margin-right: -13px;
}
.doc-icon {
    width: 14px;
    height: 16px;
    margin-right: -3px;
}

/* toolbars */
.toolbars {
    flex: none;
    border-bottom: 2px solid #858585;
    padding-bottom: 1px;
}
.toolbar-row {
    display: flex;
    gap: 1px;
    height: 25px;
    padding-left: 2px;
}
.toolbar-row + .toolbar-row {
    margin-top: 1px;
}
.toolbar {
    display: flex;
    align-items: center;
    height: 25px;
    border-radius: 3px;
    background: linear-gradient(#fff 40%, #e6e9ed);
    border-bottom: 1px solid #a9aeb5;
}
.grip {
    width: 8px;
    height: 15px;
    flex: none;
    background: linear-gradient(#b9bec5 2px, transparent 2px) 2px 0 / 2px 4px repeat-y;
}
.grip.roomy {
    width: 10px;
}
.tb {
    width: 22px;
    height: 22px;
    position: relative;
}
.tb svg {
    width: 16px;
    height: 16px;
}
.tb svg.big {
    width: 18px;
    height: 18px;
}
.tb.active {
    border: 1px solid #c9a24a;
    border-radius: 2px;
    background: linear-gradient(#fde3a0, #fcd364);
}
.tb.more::after {
    content: "";
    position: absolute;
    right: 0;
    bottom: 3px;
    border-left: 4px solid transparent;
    border-bottom: 4px solid #777;
}
.tb.magnet {
    width: 35px;
    gap: 4px;
}
.fx {
    color: #000080;
    font-size: 12px;
    font-weight: 500;
}
.compact .tb {
    width: 17px;
    align-items: flex-start;
}
.compact .tb svg {
    width: 14px;
    height: 14px;
}
.compact .tb:not(.wide)::after {
    content: "";
    position: absolute;
    left: 5px;
    bottom: 2px;
    width: 6px;
    border-bottom: 2px dotted #aab0b8;
}
.compact .tb.active {
    height: 18px;
    margin-bottom: 4px;
    border-color: #8fc0f0;
    border-radius: 0;
}
.compact .tb.active::after {
    bottom: -4px;
    left: 4px;
}
.compact .tb.wide {
    width: 22px;
    align-items: center;
}
.compact .tb.wide svg {
    width: 16px;
    height: 16px;
}
.sep {
    width: 8px;
    height: 14px;
    flex: none;
    background: linear-gradient(#9a9fa6, #9a9fa6) 4px 0 / 1px 14px no-repeat;
}
.drop {
    width: 12px;
    height: 22px;
}
.drop::after,
.tri {
    content: "";
    border: 3px solid transparent;
    border-top-color: #80858c;
    border-bottom: 0;
}
.cap {
    width: 11px;
    height: 25px;
    margin-left: 3px;
    padding-bottom: 3px;
    flex-direction: column;
    justify-content: flex-end;
    gap: 1px;
    border-radius: 0 3px 3px 0;
    background: linear-gradient(#c3c7cb, #8d9298);
}
.cap::before {
    content: "";
    width: 6px;
    border-top: 1px solid #fff;
}
.cap::after {
    content: "";
    border: 3px solid transparent;
    border-top-color: #fff;
    border-bottom: 0;
}

/* drop-down fields */
.combo {
    position: relative;
    display: flex;
    align-items: center;
    flex: none;
    height: 20px;
    border: 1px solid #a0a6ae;
    background-color: #fff;
}
.combo select {
    appearance: none;
    width: 100%;
    height: 18px;
    padding: 0 16px 0 5px;
    background: none;
    font-family: "DejaVu Sans Condensed", sans-serif;
}
.combo::before {
    content: "";
    position: absolute;
    right: 0;
    width: 16px;
    height: 18px;
    border: 1px solid #6d7178;
    background: linear-gradient(#f8f8f8, #cfd2d6);
    pointer-events: none;
}
.combo::after {
    content: "";
    position: absolute;
    right: 4px;
    border: 4px solid transparent;
    border-top-color: #000;
    border-bottom: 0;
    pointer-events: none;
}
.zoom { width: 66px; margin: 0 1px; }
.step { width: 60px; margin: 0 1px; }
.view { width: 85px; margin: 0 1px; }
.layer { width: 127px; margin: 0 1px; }
.coord {
    width: 48px;
    height: 20px;
    margin: 0 1px;
    padding: 0 3px;
    border: 1px solid #a0a6ae;
    font-family: "DejaVu Sans Condensed", sans-serif;
}

/* drawing area */
.canvas {
    flex: 1;
    min-height: 0;
    overflow: hidden;
    background-color: #fff;
    border-left: 2px solid #9a9a9a;
    border-right: 2px solid #e1e5e8;
}
.sheet {
    overflow: visible;
}
.thin {
    stroke: #000;
    fill: none;
}
.bold {
    stroke: #000;
    stroke-width: 2;
    fill: none;
}
.gost {
    font: italic 9px "DejaVu Sans Condensed", sans-serif;
}

/* property panel */
.props {
    display: flex;
    flex: none;
    height: 73px;
    padding: 8px 6px 0 2px;
    border-top: 1px solid #fff;
}
.grip.tall {
    width: 4px;
    height: 58px;
}
.props-side {
    width: 24px;
    height: 58px;
    flex: none;
    margin-right: 1px;
    padding-top: 4px;
    display: flex;
    flex-direction: column;
    align-items: center;
    gap: 6px;
    background: linear-gradient(90deg, #fff, #e8ebee);
}
.stop-text {
    fill: #fff;
    font: bold 5px "Liberation Sans", sans-serif;
    text-anchor: middle;
}
.props-main {
    flex: 1;
}
.props-bar {
    display: flex;
    align-items: center;
    height: 35px;
    padding-bottom: 1px;
    border: 1px solid #9aa1aa;
    border-bottom-color: #80868e;
    background: linear-gradient(#fff 40%, #e4e8ec);
    color: #000;
    font-family: "Open Sans", sans-serif;
}
.props-bar .sep {
    width: 6px;
    background-position: 2px 0;
}
.pb {
    width: 20px;
    height: 20px;
    margin-right: 2px;
    border: 1px solid #9aa1aa;
    background-color: #e9edf2;
}
.pb svg {
    width: 16px;
    height: 16px;
}
.pb.active {
    background: linear-gradient(#ffe58a, #fcd76a);
    border-color: #b5a36c;
}
.pb.first {
    margin-left: 18px;
    margin-right: 6px;
}
.pb.layers {
    width: 30px;
    margin: 0 14px 0 0;
}
.pb.layers svg {
    width: 26px;
}
.props-bar label {
    width: 73px;
    white-space: nowrap;
}
.props-bar label.off {
    width: 67px;
    padding-left: 2px;
    color: #70747a;
}
.p510 { width: 59px; margin-right: 4px; }
.swatch-combo { width: 42px; margin-right: 1px; }
.hatch-combo { width: 54px; margin-right: 3px; }
.combo.off {
    background-color: #e4e8ec;
}
.combo.off select {
    color: #70747a;
    opacity: 1;
    padding: 0 14px 0 4px;
}
.combo.off::before {
    border-color: #b4b9c0;
    background: #eef0f2;
}
.combo.off::after {
    border-top-color: #a0a4aa;
}
.swatch {
    position: absolute;
    left: 2px;
    pointer-events: none;
}
.field {
    display: flex;
    align-items: center;
    height: 26px;
    padding: 0 1px;
}
.field.hot {
    border: 1px solid #7db8ef;
    background: linear-gradient(#ffe98a, #fccb58);
}
.field [type="checkbox"] {
    appearance: none;
    width: 14px;
    height: 14px;
    border: 1px solid #a9afb8;
    background-color: #e6eaf0;
}
.props-bar .field label {
    width: 31px;
    padding-left: 1px;
}
.props-bar .field.hot label {
    width: 60px;
}
.num {
    width: 42px;
    height: 20px;
    border: 1px solid #a0a6ae;
    background-color: #fff;
}
.props-tab {
    gap: 2px;
    height: 20px;
    margin-left: 3px;
    padding: 0 4px 0 3px;
    background-color: #fbfcfc;
    border: 1px solid #b5bac1;
    border-top: 0;
    border-radius: 0 0 3px 3px;
    font-family: "Open Sans", sans-serif;
}

/* library manager */
.manager {
    flex: none;
}
.manager-title {
    display: flex;
    align-items: center;
    gap: 8px;
    height: 21px;
    padding: 0 5px 0 3px;
    background-color: #cdd4dc;
    border-top: 1px solid #eceff2;
    border-bottom: 1px solid #a3abb5;
}
.manager-title h2 {
    flex: 1;
}
.manager-body {
    display: flex;
    gap: 3px;
    height: 155px;
    padding: 3px 4px 2px;
    background-color: #e9edf1;
    border-bottom: 1px solid #8b929b;
    color: #000;
    font-family: "Open Sans", sans-serif;
}
.tree {
    width: 304px;
    flex: none;
    display: flex;
    flex-direction: column;
    overflow: hidden;
    border: 1px solid #959a9f;
    background-color: #fff;
    padding: 1px;
}
.tree-rows {
    flex: 1;
}
.tree-row {
    display: flex;
    align-items: center;
    gap: 3px;
    height: 18px;
    padding-left: 5px;
    white-space: nowrap;
}
.tree-row span {
    padding-left: 4px;
}
.tree-row .sel {
    flex: 1;
    background-color: #f0f0f0;
}
.tree-row.child {
    padding-left: 9px;
    gap: 0;
}
.tree-row.child span {
    padding-left: 8px;
}
.dots {
    width: 9px;
    border-top: 1px dotted #999;
}
.scrollbar {
    display: flex;
    align-items: center;
    height: 16px;
    background-color: #f0f1f2;
}
.arrow {
    width: 17px;
}
.arrow::after {
    content: "";
    border: 4px solid transparent;
}
.arrow.left::after {
    border-right-color: #333;
    border-left: 0;
}
.arrow.right::after {
    border-left-color: #333;
    border-right: 0;
}
.thumb {
    width: 223px;
    height: 15px;
    margin-right: auto;
    margin-left: 1px;
    display: flex;
    align-items: center;
    justify-content: center;
    border: 1px solid #979797;
    border-radius: 2px;
    background: linear-gradient(#f3f3f3 50%, #d3d4d6 50%, #d0d1d3);
}
.thumb i {
    width: 8px;
    height: 7px;
    background: repeating-linear-gradient(90deg, #666 0 1px, transparent 1px 3px);
}
.files {
    flex: 1;
    display: flex;
    flex-direction: column;
    flex-wrap: wrap;
    align-content: flex-start;
    padding: 1px 3px 20px;
    border: 1px solid #959a9f;
    background-color: #fff;
}
.files li {
    display: flex;
    align-items: center;
    gap: 2px;
    width: 226px;
    height: 17px;
    white-space: nowrap;
}
.files svg {
    width: 16px;
    height: 16px;
}
.files span {
    padding: 0 2px;
}
.files .picked span {
    background-color: #f0f0f0;
}
.manager-tabs {
    display: flex;
    height: 25px;
    padding: 0 1px;
    align-items: flex-start;
    border-bottom: 1px solid #959ca5;
}
.manager-tabs button {
    height: 22px;
    padding: 1px 4px 0;
    border: 1px solid transparent;
    border-top: 0;
}
.manager-tabs .current {
    background-color: #fbfcfc;
    border-color: #b5bac1;
    border-radius: 0 0 3px 3px;
}

/* status line */
.status {
    display: flex;
    justify-content: space-between;
    align-items: center;
    height: 19px;
    flex: none;
    padding: 1px 85px 0 6px;
    background: linear-gradient(#dde1e5, #bcc1c7);
    border-bottom: 1px solid #4a4e54;
}
.status i {
    height: 17px;
    border-left: 1px solid #8e949b;
    border-right: 1px solid #fff;
}

/* taskbar */
.taskbar {
    display: flex;
    height: 39px;
    flex: none;
    background: linear-gradient(90deg, #7f91a9, #a4bddb 90px, #a4bddb 71%, #7f93ad 76%, #8095b0);
}
.task {
    width: 61px;
}
.task.start {
    width: 60px;
    padding-right: 6px;
}
.task.open {
    width: 54px;
    margin-left: 3px;
    border: 1px solid #3c5573;
    border-radius: 3px;
    background: linear-gradient(#d5e2f2, #b3c8e2);
    box-shadow: inset 0 0 0 1px #e9f1fa, 2px 0 #c3d5ea, 3px 0 #6c84a2;
}
.task.open.app {
    margin-left: 7px;
    background: linear-gradient(#eef4fb, #d4e2f2);
    color: #1f6fc0;
}
.tray {
    display: flex;
    align-items: center;
    gap: 8px;
    margin-left: auto;
    color: #fff;
    font-family: "Open Sans", sans-serif;
}
.tray svg {
    width: 16px;
    height: 16px;
}
.lang {
    margin: 0 6px 6px 0;
}
.clock {
    width: 84px;
    padding-left: 6px;
    display: flex;
    flex-direction: column;
    align-items: center;
}
.desktop {
    width: 15px;
    height: 39px;
    border: 1px solid #3e5068;
    background: linear-gradient(90deg, #9db2cc, #5f7590);
}
```
